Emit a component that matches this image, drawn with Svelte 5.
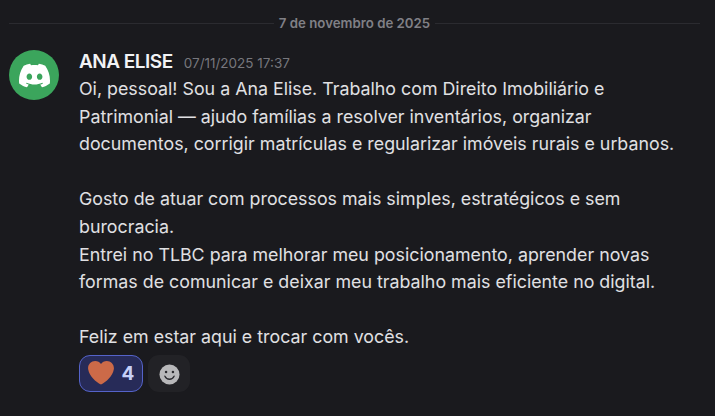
<script>
  const paragraphs = [
    [
      "Oi, pessoal! Sou a Ana Elise. Trabalho com Direito Imobiliário e",
      "Patrimonial — ajudo famílias a resolver inventários, organizar",
      "documentos, corrigir matrículas e regularizar imóveis rurais e urbanos.",
    ],
    [
      "Gosto de atuar com processos mais simples, estratégicos e sem",
      "burocracia.",
      "Entrei no TLBC para melhorar meu posicionamento, aprender novas",
      "formas de comunicar e deixar meu trabalho mais eficiente no digital.",
    ],
    ["Feliz em estar aqui e trocar com vocês."],
  ];
</script>

<main class="chat">
  <div class="divider">
    <span class="line"></span>
    <span class="date">7 de novembro de 2025</span>
    <span class="line"></span>
  </div>

  <article class="message">
    <div class="avatar">
      <svg viewBox="0 0 24 24" width="31" height="31" aria-hidden="true">
        <path fill="#fff" d="M20.317 4.3698a19.7913 19.7913 0 00-4.8851-1.5152.0741.0741 0 00-.0785.0371c-.211.3753-.4447.8648-.6083 1.2495-1.8447-.2762-3.68-.2762-5.4868 0-.1636-.3933-.4058-.8742-.6177-1.2495a.077.077 0 00-.0785-.037 19.7363 19.7363 0 00-4.8852 1.515.0699.0699 0 00-.0321.0277C.5334 9.0458-.319 13.5799.0992 18.0578a.0824.0824 0 00.0312.0561c2.0528 1.5076 4.0413 2.4228 5.9929 3.0294a.0777.0777 0 00.0842-.0276c.4616-.6304.8731-1.2952 1.226-1.9942a.076.076 0 00-.0416-.1057c-.6528-.2476-1.2743-.5495-1.8722-.8923a.077.077 0 01-.0076-.1277c.1258-.0943.2517-.1923.3718-.2914a.0743.0743 0 01.0776-.0105c3.9278 1.7933 8.18 1.7933 12.0614 0a.0739.0739 0 01.0785.0095c.1202.099.246.1981.3728.2924a.077.077 0 01-.0066.1276 12.2986 12.2986 0 01-1.873.8914.0766.0766 0 00-.0407.1067c.3604.698.7719 1.3628 1.225 1.9932a.076.076 0 00.0842.0286c1.961-.6067 3.9495-1.5219 6.0023-3.0294a.077.077 0 00.0313-.0552c.5004-5.177-.8382-9.6739-3.5485-13.6604a.061.061 0 00-.0312-.0286zM8.02 15.3312c-1.1825 0-2.1569-1.0857-2.1569-2.419 0-1.3332.9555-2.4189 2.157-2.4189 1.2108 0 2.1757 1.0952 2.1568 2.419 0 1.3332-.9555 2.4189-2.1569 2.4189zm7.9748 0c-1.1825 0-2.1569-1.0857-2.1569-2.419 0-1.3332.9554-2.4189 2.1569-2.4189 1.2108 0 2.1757 1.0952 2.1568 2.419 0 1.3332-.946 2.4189-2.1568 2.4189Z" />
      </svg>
    </div>

    <div class="body">
      <header class="meta">
        <span class="name">ANA ELISE</span>
        <time class="stamp">07/11/2025 17:37</time>
      </header>

      <div class="text">
        {#each paragraphs as lines}
          <p>
            {#each lines as line}
              <span class="row">{line}</span>
            {/each}
          </p>
        {/each}
      </div>

      <div class="reactions">
        <button class="reaction active">
          <svg viewBox="0 0 36 36" width="26" height="26" aria-hidden="true">
            <path fill="#cc6a48" d="M35.9 11.3C35.9 5.8 31.4 1.4 26 1.4c-3.3 0-6.3 1.6-8 4.2-1.7-2.6-4.7-4.2-8-4.2C4.5 1.4.1 5.8.1 11.3c0 .8.1 1.5.3 2.3C1.7 22 11 31 18 34c7-3 16.3-12 17.6-20.4.2-.8.3-1.5.3-2.3z" />
          </svg>
          <span class="count">4</span>
        </button>
        <button class="reaction add" aria-label="Adicionar reação">
          <svg viewBox="0 0 22 22" width="21" height="21" aria-hidden="true">
            <circle cx="11" cy="11" r="10.5" fill="#b8b8ba" />
            <circle cx="7.4" cy="8.4" r="1.3" fill="#2a2a2f" />
            <circle cx="14.6" cy="8.4" r="1.3" fill="#2a2a2f" />
            <path d="M6.2 12.8c1 2.2 2.8 3.2 4.8 3.2s3.8-1 4.8-3.2" fill="none" stroke="#2a2a2f" stroke-width="1.4" stroke-linecap="round" />
          </svg>
        </button>
      </div>
    </div>
  </article>
</main>

<style>
  :global(body) {
    background: #1a1a1e;
  }
  .chat {
    width: 715px;
    height: 416px;
    overflow: hidden;
    background: #1a1a1e;
    padding: 13px 15px 0 9px;
    box-sizing: border-box;
    font-family: Inter, sans-serif;
  }
  .divider {
    display: flex;
    align-items: center;
    gap: 5px;
    height: 20px;
  }
  .line {
    flex: 1;
    height: 1px;
    background: #2b2b30;
  }
  .date {
    font-size: 13.25px;
    font-weight: 600;
    color: #808086;
  }
  .message {
    display: flex;
    gap: 20px;
    margin-top: 17px;
  }
  .avatar {
    flex: none;
    width: 50px;
    height: 50px;
    border-radius: 50%;
    background: #3ba55c;
    display: flex;
    align-items: center;
    justify-content: center;
  }
  .meta {
    display: flex;
    align-items: baseline;
    gap: 11px;
    height: 25px;
  }
  .name {
    font-size: 19px;
    font-weight: 600;
    letter-spacing: -0.5px;
    color: #f2f3f5;
  }
  .stamp {
    font-size: 13.5px;
    color: #77777d;
  }
  .text {
    font-size: 17.82px;
    line-height: 27.6px;
    color: #e0e0e3;
  }
  .text p {
    margin: 0 0 27.6px;
  }
  .text p:last-child {
    margin-bottom: 0;
  }
  .row {
    display: block;
    white-space: nowrap;
  }
  .reactions {
    display: flex;
    gap: 5px;
    margin-top: 4px;
  }
  .reaction {
    display: flex;
    align-items: center;
    justify-content: center;
    height: 37px;
    padding: 0;
    border: 1px solid transparent;
    border-radius: 11px;
    background: #222226;
    box-sizing: border-box;
  }
  .active {
    width: 64px;
    gap: 8px;
    border-color: #5563c9;
    background: #272b58;
  }
  .add {
    width: 42px;
  }
  .add svg {
    margin-top: 2px;
  }
  .count {
    font: 700 19px Inter, sans-serif;
    color: #c5d0f8;
  }
</style>
